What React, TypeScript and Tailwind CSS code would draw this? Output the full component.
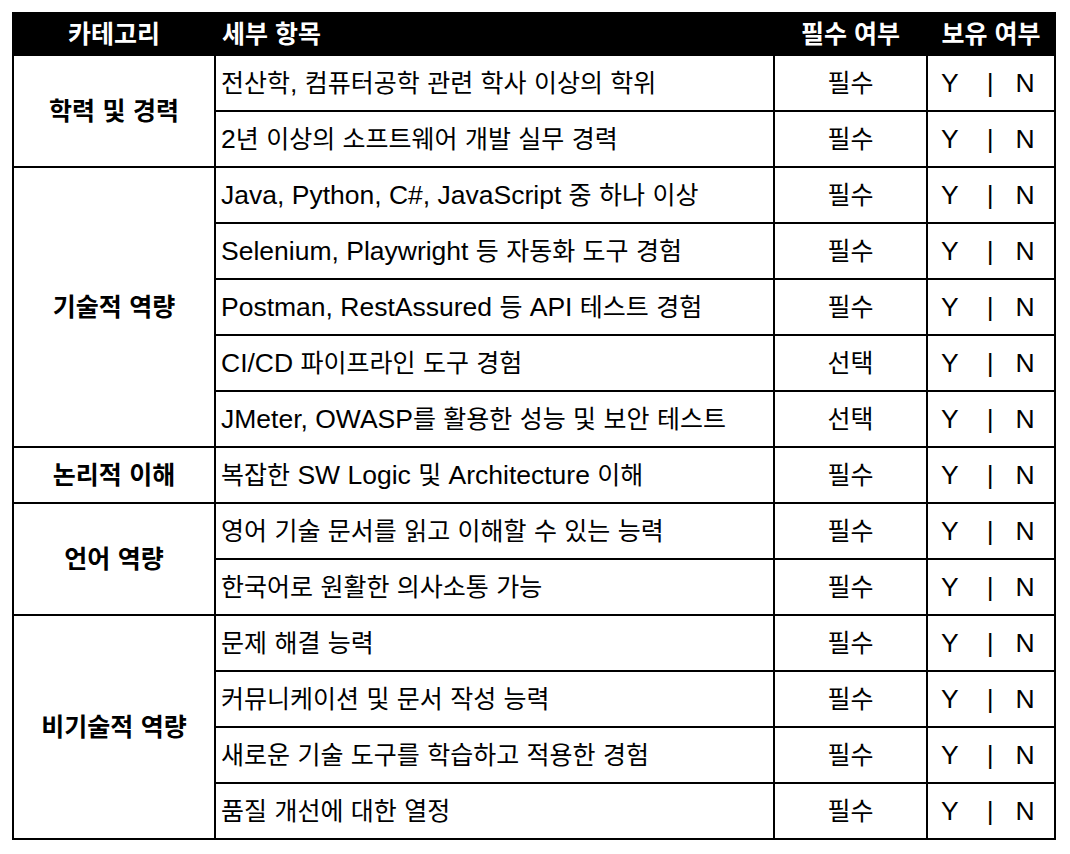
import React from "react";

type Item = { text: string; req: string };
type Group = { cat: string; items: Item[] };

const groups: Group[] = [
  {
    cat: "학력 및 경력",
    items: [
      { text: "전산학, 컴퓨터공학 관련 학사 이상의 학위", req: "필수" },
      { text: "2년 이상의 소프트웨어 개발 실무 경력", req: "필수" },
    ],
  },
  {
    cat: "기술적 역량",
    items: [
      { text: "Java, Python, C#, JavaScript 중 하나 이상", req: "필수" },
      { text: "Selenium, Playwright 등 자동화 도구 경험", req: "필수" },
      { text: "Postman, RestAssured 등 API 테스트 경험", req: "필수" },
      { text: "CI/CD 파이프라인 도구 경험", req: "선택" },
      { text: "JMeter, OWASP를 활용한 성능 및 보안 테스트", req: "선택" },
    ],
  },
  {
    cat: "논리적 이해",
    items: [{ text: "복잡한 SW Logic 및 Architecture 이해", req: "필수" }],
  },
  {
    cat: "언어 역량",
    items: [
      { text: "영어 기술 문서를 읽고 이해할 수 있는 능력", req: "필수" },
      { text: "한국어로 원활한 의사소통 가능", req: "필수" },
    ],
  },
  {
    cat: "비기술적 역량",
    items: [
      { text: "문제 해결 능력", req: "필수" },
      { text: "커뮤니케이션 및 문서 작성 능력", req: "필수" },
      { text: "새로운 기술 도구를 학습하고 적용한 경험", req: "필수" },
      { text: "품질 개선에 대한 열정", req: "필수" },
    ],
  },
];

function Mixed({ text }: { text: string }) {
  const parts = text.split(/([\u3131-\uD79D]+)/).filter((p) => p.length > 0);
  return (
    <>
      {parts.map((p, i) =>
        /[\u3131-\uD79D]/.test(p) ? (
          <span key={i}>{p}</span>
        ) : (
          <span key={i} className="text-[26.5px]">
            {p}
          </span>
        )
      )}
    </>
  );
}

export default function App() {
  return (
    <div
      className="bg-white min-h-[854px] w-[1070px] pt-[12px] pl-[12px] text-black"
      style={{ fontFamily: '"Liberation Sans", "Noto Sans CJK KR", sans-serif' }}
    >
      <table className="table-fixed border-collapse w-[1042px] text-[25px] leading-none">
        <colgroup>
          <col className="w-[202px]" />
          <col className="w-[559px]" />
          <col className="w-[153px]" />
          <col className="w-[128px]" />
        </colgroup>
        <thead>
          <tr className="bg-black text-white h-[42px]">
            <th className="font-bold text-center border-2 border-black">카테고리</th>
            <th className="font-bold text-left pl-[6px] border-2 border-black">세부 항목</th>
            <th className="font-bold text-center border-2 border-black">필수 여부</th>
            <th className="font-bold text-center border-2 border-black">보유 여부</th>
          </tr>
        </thead>
        <tbody>
          {groups.map((g) =>
            g.items.map((it, i) => (
              <tr key={g.cat + i} className="h-[56px]">
                {i === 0 && (
                  <td
                    rowSpan={g.items.length}
                    className="border-2 border-black text-center font-bold align-middle"
                  >
                    <Mixed text={g.cat} />
                  </td>
                )}
                <td className="border-2 border-black pl-[5px] align-middle whitespace-nowrap">
                  <Mixed text={it.text} />
                </td>
                <td className="border-2 border-black text-center align-middle">{it.req}</td>
                <td className="border-2 border-black align-middle">
                  <div className="flex justify-start items-center pl-[13px] text-[26.5px]">
                    <span>Y</span>
                    <span className="ml-[28px]">|</span>
                    <span className="ml-[22px]">N</span>
                  </div>
                </td>
              </tr>
            ))
          )}
        </tbody>
      </table>
    </div>
  );
}
